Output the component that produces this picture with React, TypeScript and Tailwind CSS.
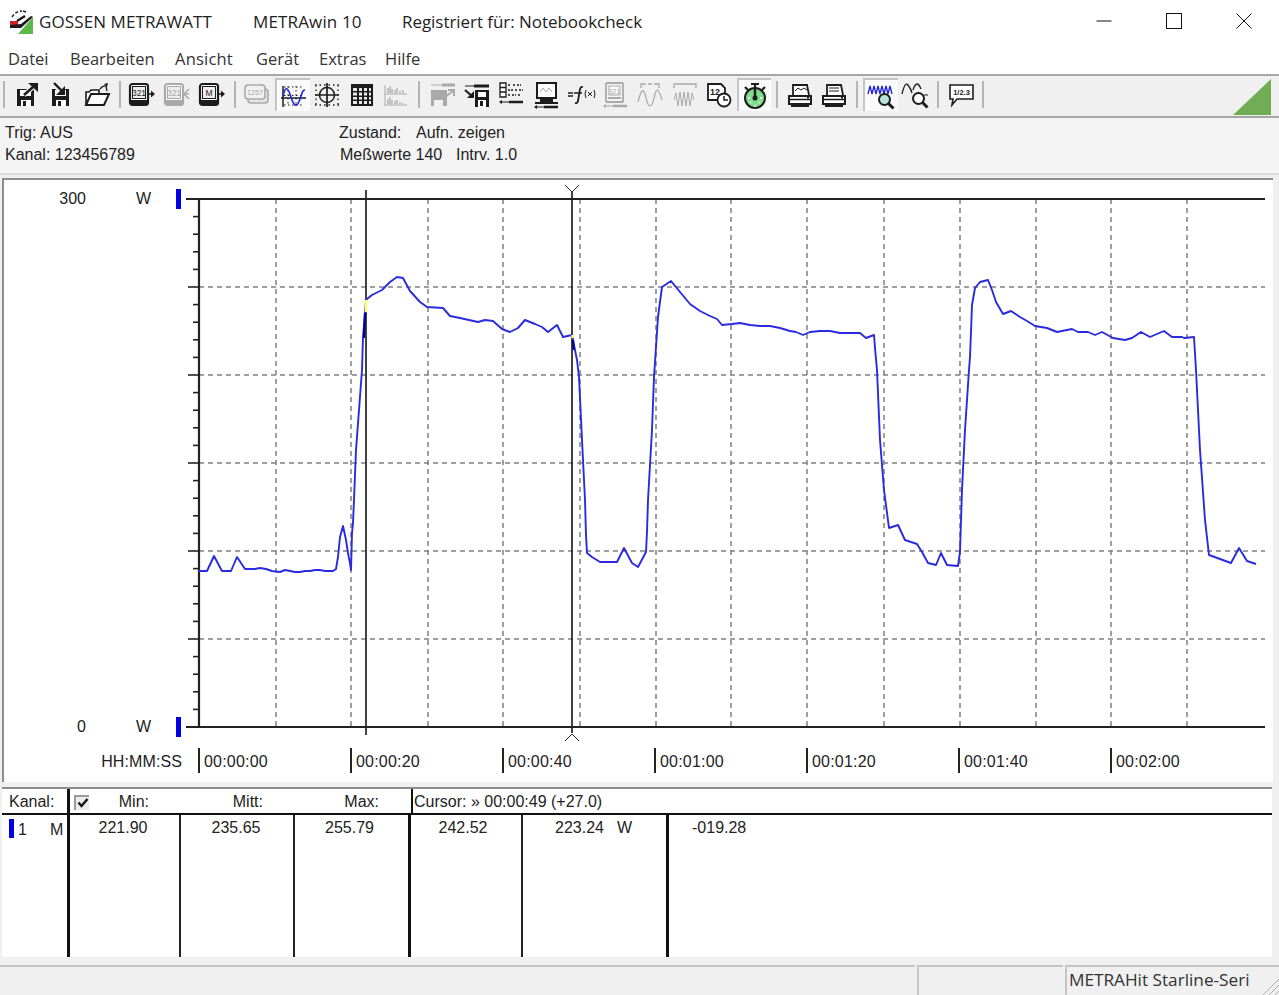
import React from "react";

const ink = "#1c1c1c";
const gr = "#a9a9a9";

const Ic = ({ children }: { children: React.ReactNode }) => (
  <svg viewBox="0 0 30 30" className="h-[30px] w-[30px]" fill="none">
    {children}
  </svg>
);

const Floppy = ({ c }: { c: string }) => (
  <>
    <path d="M5 9h17v17H5z" fill={c} />
    <rect x="8" y="10" width="11" height="6" fill="#fff" />
    <rect x="9" y="20" width="10" height="6" fill="#fff" />
    <rect x="11" y="21" width="3" height="5" fill={c} />
  </>
);

const Device = ({ c, label, right }: { c: string; label: string; right?: React.ReactNode }) => (
  <>
    <rect x="3" y="4" width="18" height="21" rx="2.5" fill="#fff" stroke={c} strokeWidth="2.200" />
    <path d="M4 20h16v5H4z" fill={c} />
    <rect x="5.500" y="6.500" width="13" height="12" fill="#eee" stroke={c} strokeWidth="1" />
    <text x="12" y="15.800" textAnchor="middle" fontSize="8.500" fontFamily="Liberation Sans" fill={c}>
      {label}
    </text>
    {right}
  </>
);

const OutArrow = ({ c }: { c: string }) => (
  <>
    <path d="M21 14h4" stroke={c} strokeWidth="1.500" />
    <path d="M24 10.500l4 3.500-4 3.500z" fill={c} />
  </>
);

const Cable = ({ c, y = 27 }: { c: string; y?: number }) => (
  <>
    <path d={`M4 ${y}h10`} stroke={c} strokeWidth="1" />
    <path d={`M13 ${y}h14`} stroke={c} strokeWidth="2.500" />
    <path d={`M6 ${y - 2}l-3 2 3 2z`} fill={c} />
  </>
);

const Printer = ({ wave }: { wave?: boolean }) => (
  <>
    <path d="M8 15V5h14l2 10" fill="#fff" stroke={ink} strokeWidth="1.800" />
    {wave ? (
      <path d="M10 11l3-3 3 2 3-2 3 2" stroke={ink} strokeWidth="1" />
    ) : (
      <path d="M10 8h10M10 11h10" stroke={ink} strokeWidth="1" />
    )}
    <path d="M4 16h22v8H4z" fill="#fff" stroke={ink} strokeWidth="2" />
    <path d="M4 19.500h22" stroke={ink} strokeWidth="1.500" />
    <path d="M6 24h18v3H6z" fill={ink} />
    <rect x="22" y="17" width="2" height="1.500" fill={ink} />
  </>
);

const Lens = ({ tint }: { tint?: boolean }) => (
  <>
    <circle cx="18.500" cy="18.500" r="5.500" fill={tint ? "#b9e3dc" : "#fff"} stroke={ink} strokeWidth="2" />
    <path d="M22.500 22.500l5 5" stroke={ink} strokeWidth="3" />
  </>
);

const icons: React.ReactNode[] = [
  <Ic key="0">
    <Floppy c={ink} />
    <path d="M12 15l9-8" stroke="#f0f0f0" strokeWidth="5" />
    <path d="M12 15l9-8" stroke={ink} strokeWidth="2.400" />
    <path d="M16 3h10v9z" fill={ink} />
  </Ic>,
  <Ic key="1">
    <Floppy c={ink} />
    <path d="M8 5l8 8" stroke="#f0f0f0" strokeWidth="5" />
    <path d="M7 3l8 8" stroke={ink} strokeWidth="2.400" />
    <path d="M18 6v9H9z" fill={ink} />
  </Ic>,
  <Ic key="2">
    <path d="M4 24V12h3l2-2h8v3" fill="#fff" stroke={ink} strokeWidth="1.600" />
    <path d="M4 25l5-11h18l-5 11z" fill="#fff" stroke={ink} strokeWidth="2" />
    <path d="M18 9q3-4 6-3l1 5" stroke={ink} strokeWidth="1.300" />
    <path d="M22 4l4-1-1 4z" fill={ink} />
  </Ic>,
  <Ic key="3"><Device c={ink} label="321" right={<OutArrow c={ink} />} /></Ic>,
  <Ic key="4">
    <Device c={gr} label="321" right={<path d="M27 9l-5 5 5 5M22 14h5" stroke={gr} strokeWidth="1.600" />} />
  </Ic>,
  <Ic key="5"><Device c={ink} label="M" right={<OutArrow c={ink} />} /></Ic>,
  <Ic key="6">
    <rect x="6" y="9" width="20" height="14" rx="3" fill="#e4e4e4" stroke={gr} strokeWidth="1.600" />
    <rect x="3" y="5" width="20" height="14" rx="3" fill="#f0f0f0" stroke={gr} strokeWidth="1.600" />
    <text x="13" y="14.500" textAnchor="middle" fontSize="7" fontFamily="Liberation Sans" fill={gr}>1257</text>
  </Ic>,
  <Ic key="7">
    <path d="M6 6h20M6 14.500h20M6 24h20M10 5v20M18 5v20" stroke={ink} strokeWidth="1" strokeDasharray="1.500 2.500" />
    <path d="M5 5v21" stroke={ink} strokeWidth="1.500" />
    <path d="M3 17h25" stroke={ink} strokeWidth="1.500" />
    <path d="M5 16c2-12 5-10 8 0s6 11 9 2 3-9 5-9" stroke="#2222dd" strokeWidth="1.600" />
  </Ic>,
  <Ic key="8">
    <path d="M3 5h24M3 25h24M4 5v20M26 5v20" stroke={ink} strokeWidth="1.300" strokeDasharray="1.500 3" />
    <circle cx="15" cy="15" r="7.500" stroke={ink} strokeWidth="1.500" />
    <path d="M15 3v24M3 15h24" stroke={ink} strokeWidth="1.700" />
  </Ic>,
  <Ic key="9">
    <path d="M4 4h22v22H4z" fill={ink} />
    <path d="M6 8h4v3H6zM12 8h3v3h-3zM17 8h3v3h-3zM22 8h2v3h-2zM6 12.500h4v3H6zM12 12.500h3v3h-3zM17 12.500h3v3h-3zM22 12.500h2v3h-2zM6 17h4v2.500H6zM12 17h3v2.500h-3zM17 17h3v2.500h-3zM22 17h2v2.500h-2zM6 21h4v3H6zM12 21h3v3h-3zM17 21h3v3h-3zM22 21h2v3h-2z" fill="#e8e8e8" />
  </Ic>,
  <Ic key="10">
    <path d="M4 5v21M4 14h22M4 25h22" stroke={gr} strokeWidth="1" />
    <path d="M7 13V8M9 13V6M11 13V9M14 13V10M16 13V8M19 13v-2M22 13v-3M7 24v-5M9 24v-7M11 24v-4M14 24v-3M16 24v-4M19 24v-2M22 24v-1" stroke={gr} strokeWidth="1.300" />
  </Ic>,
  <Ic key="11">
    <path d="M4 5h24" stroke={gr} strokeWidth="1" />
    <path d="M15 5h13" stroke={gr} strokeWidth="3" />
    <path d="M4 10h16v16H4z" fill={gr} />
    <rect x="7" y="20" width="9" height="6" fill="#f0f0f0" />
    <path d="M18 17l8-6M21 10h6v6" stroke={gr} strokeWidth="2" />
  </Ic>,
  <Ic key="12">
    <path d="M3 6h10" stroke={ink} strokeWidth="1" />
    <path d="M12 6h15" stroke={ink} strokeWidth="3" />
    <path d="M3 10l8 7" stroke={ink} strokeWidth="2.200" />
    <path d="M12 11v7H5z" fill={ink} />
    <path d="M13 10h14v17H13z" fill={ink} />
    <rect x="16" y="12" width="8" height="5" fill="#fff" />
    <rect x="16" y="20" width="8" height="7" fill="#fff" />
    <rect x="18" y="21" width="3" height="5" fill={ink} />
  </Ic>,
  <Ic key="13">
    <path d="M4 3h6v14H4z" fill="#fff" stroke={ink} strokeWidth="1.300" />
    <path d="M4 7.500h6M4 12h6" stroke={ink} strokeWidth="1.300" />
    <path d="M12 5h3M17 5h2M21 5h4M12 10h5M19 10h2M23 10h4M12 15h2M16 15h4M22 15h3" stroke={ink} strokeWidth="1.700" strokeDasharray="2 1" />
    <Cable c={ink} y={22} />
  </Ic>,
  <Ic key="14">
    <rect x="6" y="3" width="19" height="15" fill="#fff" stroke={ink} strokeWidth="2" />
    <path d="M9 12l3-4 3 4 3-4 3 4" stroke={gr} strokeWidth="1" />
    <path d="M9 18h13v4H9z" fill={ink} />
    <path d="M4 22h23v2H4z" fill={ink} />
    <Cable c={ink} y={27} />
  </Ic>,
  <Ic key="15">
    <path d="M2 13h5M2 16h5" stroke={ink} strokeWidth="1.300" />
    <path d="M9 23c3 1 3-2 4-8s1-9 4-8" stroke={ink} strokeWidth="1.800" />
    <path d="M8 13h8" stroke={ink} strokeWidth="1.500" />
    <path d="M20 10q-2 4 0 8M28 10q2 4 0 8M22 12l4 4M26 12l-4 4" stroke={ink} strokeWidth="1" />
  </Ic>,
  <Ic key="16">
    <rect x="6" y="3" width="17" height="19" rx="1" fill="#f4f4f4" stroke={gr} strokeWidth="1.800" />
    <rect x="9" y="6" width="11" height="9" fill="#f8f8f8" stroke={gr} strokeWidth="1" />
    <text x="14.500" y="13.500" textAnchor="middle" fontSize="7" fontFamily="Liberation Sans" fill={gr}>321</text>
    <path d="M8 18h13" stroke={gr} strokeWidth="2" />
    <Cable c={gr} y={26} />
  </Ic>,
  <Ic key="17">
    <path d="M6 8V4h5M24 8V4h-5M13 4h4" stroke={gr} strokeWidth="1.300" />
    <path d="M3 22c3-12 5-14 7-8s2 12 5 12 4-8 5-12 3-8 7 6" stroke={gr} strokeWidth="1.200" />
  </Ic>,
  <Ic key="18">
    <path d="M4 8V4h22v4" stroke={gr} strokeWidth="1.300" />
    <path d="M4 20l2-7 2 13 2-14 2 14 2-14 2 14 2-14 2 14 2-13 2 7" stroke={gr} strokeWidth="1" />
  </Ic>,
  <Ic key="19">
    <path d="M4 4h13l4 4v12H4z" fill="#fff" stroke={ink} strokeWidth="1.800" />
    <text x="11" y="15" textAnchor="middle" fontSize="9" fontFamily="Liberation Sans" fontWeight="bold" fill={ink}>12</text>
    <circle cx="20" cy="20" r="6.500" fill="#fff" stroke={ink} strokeWidth="1.800" />
    <path d="M20 16v4h4" stroke={ink} strokeWidth="1.500" />
  </Ic>,
  <Ic key="20">
    <circle cx="15" cy="17" r="10" fill="#7fdc8b" stroke={ink} strokeWidth="2" />
    <path d="M11 3h8M15 3v6M5 6l4 4M25 6l-4 4" stroke={ink} strokeWidth="2.200" />
    <path d="M15 17V9" stroke={ink} strokeWidth="2.500" />
    <circle cx="15" cy="17" r="2.500" fill={ink} />
    <path d="M8 17h2M20 17h2M15 24v2M10 22l1-1M20 22l-1-1" stroke="#fff" strokeWidth="1.300" />
  </Ic>,
  <Ic key="21"><Printer wave /></Ic>,
  <Ic key="22"><Printer /></Ic>,
  <Ic key="23">
    <path d="M2 13l2-8 2 8 2-8 2 8 2-8 2 8 2-8 2 8 2-8 2 8 2-8 2 8" stroke="#2222dd" strokeWidth="1.300" />
    <Lens tint />
  </Ic>,
  <Ic key="24">
    <path d="M2 14q3-13 6-9t4 8" stroke={ink} strokeWidth="1.300" />
    <path d="M13 10q2-6 4-6t4 5" stroke={ink} strokeWidth="1.300" />
    <path d="M24 15h4" stroke={ink} strokeWidth="1" />
    <Lens />
  </Ic>,
  <Ic key="25">
    <path d="M4 5h23v14H11l-5 6 1-6H4z" fill="#fff" stroke={ink} strokeWidth="1.600" />
    <text x="15.500" y="14.500" textAnchor="middle" fontSize="7.500" fontFamily="Liberation Sans" fontWeight="bold" fill={ink}>1/2.3</text>
  </Ic>,
];

const groups: { from: number; to: number }[] = [
  { from: 0, to: 3 },
  { from: 3, to: 6 },
  { from: 6, to: 11 },
  { from: 11, to: 21 },
  { from: 21, to: 23 },
  { from: 23, to: 25 },
  { from: 25, to: 26 },
];
const pressed = new Set([7, 20, 23]);

const Sep = () => <div className="mx-[4.500px] mt-[5px] h-[27px] w-[2px] shrink-0 bg-[#b4b4b4]" />;

const curve =
  "198,571 207,571 214,556 222,571 231,571 237,557 245,569 255,569 260,568 266,569 272,571 280,572 285,570 290,571 295,572 300,572 305,571 310,571 315,570 320,570 325,571 333,571 336,569 338,557 340,537 343,526 346,540 348,553 350,563 351,570 352,533 353,523 354,500 356,450 359,410 362,370 363,337 365,313 366,300 367,299 372,295 382,290 390,282 397,277 403,278 410,291 420,302 427,307 443,308 450,316 460,318 478,322 485,320 493,321 502,329 510,332 518,328 525,320 535,324 542,327 548,332 557,325 563,337 572,335 573,340 577,360 579,377 582,440 585,500 586,535 587,553 592,557 600,562 617,562 624,548 632,563 638,567 646,552 647,532 648,500 652,430 654,377 656,347 658,317 662,287 671,281 680,292 690,304 700,311 710,316 717,319 722,325 732,324 740,323 750,325 760,326 770,326 780,328 790,331 796,332 803,335 810,332 820,331 830,331 840,333 860,333 866,338 874,335 875,348 877,370 880,440 884,490 889,528 898,525 905,540 917,544 922,552 928,563 936,565 941,553 947,565 958,566 960,552 962,490 965,430 969,370 970,357 971,332 972,305 975,288 980,282 988,280 992,290 996,302 1003,314 1011,311 1020,317 1027,321 1035,326 1047,328 1057,332 1072,329 1078,332 1088,332 1095,335 1102,332 1113,338 1125,340 1132,338 1141,332 1150,337 1164,331 1172,337 1182,337 1184,338 1194,337 1196,370 1200,450 1205,520 1209,555 1220,559 1231,563 1239,548 1247,561 1256,564";

const vGrid = [276, 351, 428, 503, 580, 656, 731, 807, 884, 960, 1036, 1111, 1187];
const hGrid = [287, 375, 463, 551, 639];
const ticks = Array.from({ length: 31 }, (_, i) => 199 + i * 17.6);

const Plot = () => (
  <svg viewBox="172 180 1102 565" className="h-[565px] w-[1102px] shrink-0" fill="none">
    {vGrid.map((x) => (
      <path key={x} d={`M${x} 199V727`} stroke="#808080" strokeWidth="1.500" strokeDasharray="5 4" />
    ))}
    {hGrid.map((y) => (
      <path key={y} d={`M199 ${y}H1265`} stroke="#808080" strokeWidth="1.500" strokeDasharray="5 4" />
    ))}
    {ticks.map((y, i) => (
      <path key={i} d={`M${i % 5 === 0 ? 188 : 193} ${y}H199`} stroke="#222" strokeWidth="1.600" />
    ))}
    <path d="M199 198V727" stroke="#222" strokeWidth="2.200" />
    <path d="M186 199H1265M186 727H1265" stroke="#222" strokeWidth="2" />
    <rect x="176" y="189" width="5" height="20" fill="#0000e0" />
    <rect x="176" y="717" width="5" height="20" fill="#0000e0" />
    <path d="M366 190V735M572 192V733" stroke="#222" strokeWidth="1.700" />
    <path d="M565 185l7 7 7-7M565 741l7-7 7 7" stroke="#222" strokeWidth="1" />
    <polyline points={curve} stroke="#2a2ae0" strokeWidth="1.900" strokeLinejoin="round" />
    <path d="M365 313L364 338M573 340l0.700 10" stroke="#00008b" strokeWidth="2.200" />
    <path d="M366 300V312M572.500 335V338" stroke="#ffff70" strokeWidth="2.500" />
  </svg>
);

const labels = ["00:00:00", "00:00:20", "00:00:40", "00:01:00", "00:01:20", "00:01:40", "00:02:00"];

const YLabel = ({ v }: { v: string }) => (
  <div className="flex h-[18px] items-center leading-[18px]">
    <span className="w-[82px] text-right">{v}</span>
    <span className="ml-[50px]">W</span>
  </div>
);

export default function App() {
  return (
    <div className="flex h-[995px] w-[1279px] flex-col overflow-hidden bg-[#f0f0f0] font-['Liberation_Sans',Arial,sans-serif] text-[16px] text-[#222]">
      {/* title bar */}
      <div className="flex h-[45px] shrink-0 items-center bg-white pb-[2px] font-['Open_Sans',sans-serif] text-[17px] text-[#222]">
        <svg viewBox="0 0 26 26" className="ml-[9px] mr-[4px] h-[26px] w-[26px]" fill="none">
          <path d="M3 8q4-6 10-6" stroke="#222" strokeWidth="1.500" strokeDasharray="3 2" />
          <path d="M14 2l3 1" stroke="#222" strokeWidth="1.500" />
          <path d="M9 25L24 8V25Z" fill="#5cb848" />
          <path d="M1 12h8v4H1z" fill="#d0202a" />
          <path d="M1 16l11-1 10-8 2 1-12 11H1z" fill="#1c1c1c" />
          <path d="M8 12l8-5" stroke="#1c1c1c" strokeWidth="2.500" />
        </svg>
        <span className="w-[214px] tracking-[0.1px]">GOSSEN METRAWATT</span>
        <span className="w-[149px] tracking-[0.15px]">METRAwin 10</span>
        <span className="tracking-[-0.05px]">Registriert für: Notebookcheck</span>
        <div className="ml-auto flex h-full">
          <div className="flex w-[70px] items-center justify-center pb-[1px]">
            <svg viewBox="0 0 16 16" className="h-[16px] w-[16px]" fill="none"><path d="M0.500 8H15.500" stroke="#111" /></svg>
          </div>
          <div className="flex w-[70px] items-center justify-center pb-[1px]">
            <svg viewBox="0 0 16 16" className="h-[16px] w-[16px]" fill="none"><rect x="0.500" y="0.500" width="15" height="15" stroke="#111" /></svg>
          </div>
          <div className="flex w-[70px] items-center justify-center pb-[1px]">
            <svg viewBox="0 0 16 16" className="h-[16px] w-[16px]" fill="none"><path d="M0.500 0.500L15.500 15.500M15.500 0.500L0.500 15.500" stroke="#111" /></svg>
          </div>
        </div>
      </div>

      {/* menu */}
      <div className="flex h-[29px] shrink-0 items-center bg-white pl-[8px] font-['Open_Sans',sans-serif] text-[16.500px] text-[#333]">
        <span className="w-[62px]">Datei</span>
        <span className="w-[105px]">Bearbeiten</span>
        <span className="w-[81px] tracking-[0.2px]">Ansicht</span>
        <span className="w-[63px]">Gerät</span>
        <span className="w-[66px]">Extras</span>
        <span>Hilfe</span>
      </div>

      {/* toolbar */}
      <div className="flex h-[44px] shrink-0 items-start justify-between border-y-2 border-[#a6a6a6] bg-[#f0f0f0] pr-[8px]">
        <div className="flex items-start">
          <div className="ml-[3px] mr-[5px] mt-[5px] h-[27px] w-[2px] shrink-0 bg-[#b4b4b4]" />
          {groups.map((g, gi) => (
            <React.Fragment key={gi}>
              {icons.slice(g.from, g.to).map((ic, i) => {
                const on = pressed.has(g.from + i);
                return (
                  <div
                    key={i}
                    className={
                      on
                        ? "mt-[2px] flex h-[33px] w-[34.700px] items-center justify-center border-l-2 border-t-2 border-[#c4c4c4] bg-[#fafafa]"
                        : "mt-[2px] flex h-[33px] w-[34.700px] items-center justify-center"
                    }
                  >
                    {ic}
                  </div>
                );
              })}
              <Sep />
            </React.Fragment>
          ))}
        </div>
        <svg viewBox="0 0 38 36" className="mt-[3px] h-[36px] w-[38px]">
          <path d="M0 36L38 0V36Z" fill="#70ad54" />
        </svg>
      </div>

      {/* info */}
      <div className="flex h-[55px] shrink-0 flex-col bg-[#f4f4f4] pl-[5px] pt-[4px] leading-[22px]">
        <div className="flex">
          <span className="w-[334px]">Trig: AUS</span>
          <span className="w-[77px]">Zustand:</span>
          <span>Aufn. zeigen</span>
        </div>
        <div className="flex">
          <span className="w-[335px]">Kanal: 123456789</span>
          <span className="w-[116px]">Meßwerte 140</span>
          <span>Intrv. 1.0</span>
        </div>
      </div>

      {/* chart */}
      <div className="h-[5px] shrink-0 border-t-2 border-[#dcdcdc]" />
      <div className="ml-[2px] mr-[6px] h-[604px] shrink-0 overflow-hidden border-l-2 border-t-2 border-[#8c8c8c] bg-white">
        <div className="flex h-[565px]">
          <div className="flex w-[168px] shrink-0 flex-col justify-between pb-[9px] pt-[10px]">
            <YLabel v="300" />
            <YLabel v="0" />
          </div>
          <Plot />
        </div>
        <div className="flex h-[37px] pt-[3px]">
          <div className="flex h-[25px] w-[194px] shrink-0 items-center pr-[16px] pt-[3px]">
            <span className="w-full text-right tracking-[0.1px]">HH:MM:SS</span>
          </div>
          {labels.map((l) => (
            <div key={l} className="flex h-[25px] w-[152px] shrink-0 items-center border-l-2 border-[#222] pl-[4px] pt-[3px] tracking-[0.2px]">
              {l}
            </div>
          ))}
        </div>
      </div>

      <div className="h-[5px] shrink-0" />

      {/* table */}
      <div className="ml-[2px] mr-[7px] h-[170px] shrink-0 border-t-2 border-[#8c8c8c] bg-white">
        <div className="flex h-[26px] border-b-2 border-[#111]">
          <div className="flex w-[68px] shrink-0 items-center border-r-[3px] border-[#111] pl-[7px] pt-[2px]">Kanal:</div>
          <div className="flex w-[111px] shrink-0 items-center justify-between pl-[4px] pr-[32px] pt-[2px]">
            <span className="flex h-[15px] w-[15px] items-center justify-center border-l-2 border-t-2 border-[#999] bg-[#ececec]">
              <svg viewBox="0 0 12 12" className="h-[12px] w-[12px]" fill="none"><path d="M1.500 5.500L4.500 9L10.500 2" stroke="#111" strokeWidth="2.400" /></svg>
            </span>
            <span>Min:</span>
          </div>
          <div className="flex w-[114px] shrink-0 items-center justify-end pr-[32px] pt-[2px]">Mitt:</div>
          <div className="flex w-[116px] shrink-0 items-center justify-end pr-[32px] pt-[2px]">Max:</div>
          <div className="flex flex-1 items-center border-l-2 border-[#111] pl-[1px] pt-[2px]">Cursor: » 00:00:49 (+27.0)</div>
        </div>
        <div className="flex h-[142px] leading-[26px]">
          <div className="flex w-[68px] shrink-0 items-start border-r-[3px] border-[#111] pl-[7px] pt-[2px]">
            <span className="mt-[2px] h-[19px] w-[5px] bg-[#0000e0]" />
            <span className="ml-[4px] w-[32px]">1</span>
            <span>M</span>
          </div>
          <div className="w-[111px] shrink-0 border-r-2 border-[#222] pr-[3px] text-center">221.90</div>
          <div className="w-[114px] shrink-0 border-r-2 border-[#222] pr-[2px] text-center">235.65</div>
          <div className="w-[116px] shrink-0 border-r-[3px] border-[#111] pr-[4px] text-center">255.79</div>
          <div className="w-[112px] shrink-0 border-r-2 border-[#222] pr-[6px] text-center">242.52</div>
          <div className="flex w-[146px] shrink-0 border-r-[3px] border-[#111] pl-[32px]">
            <span>223.24</span>
            <span className="ml-[13px]">W</span>
          </div>
          <div className="flex-1 pl-[23px]">-019.28</div>
        </div>
      </div>

      <div className="h-[8px] shrink-0" />

      {/* status */}
      <div className="flex h-[30px] shrink-0 font-['Open_Sans',sans-serif] text-[17.200px] text-[#333]">
        <div className="w-[915px] border-t-2 border-[#c4c4c4]" />
        <div className="ml-[2px] w-[146px] border-l-2 border-t-2 border-[#c4c4c4]" />
        <div className="relative ml-[2px] flex-1 border-l-2 border-t-2 border-[#c4c4c4] pl-[2px] leading-[26px]">
          METRAHit Starline-Seri
          <svg viewBox="0 0 18 18" className="absolute bottom-0 right-0 h-[18px] w-[18px]" fill="none">
            <path d="M2 18L18 2M8 18L18 8M14 18L18 14" stroke="#b0b0b0" />
          </svg>
        </div>
      </div>
    </div>
  );
}
